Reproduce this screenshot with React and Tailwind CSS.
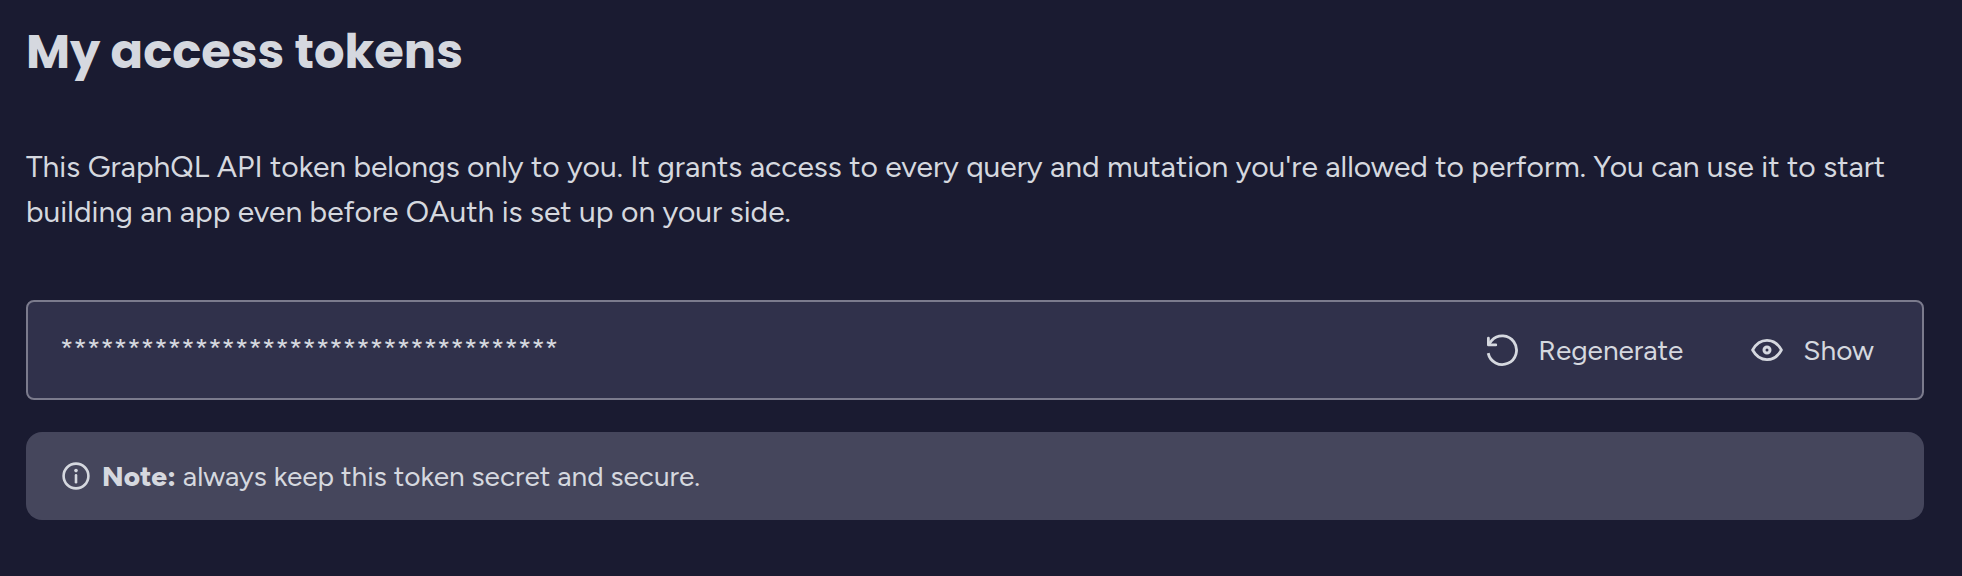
function RegenerateIcon() {
  return (
    <svg viewBox="0 0 32 32" className="size-8 shrink-0" fill="none" stroke="currentColor" strokeWidth="2.8" strokeLinejoin="round" aria-hidden="true">
      <path d="M2.2 19.1A14.3 14.3 0 1 0 5.7 6.5L2.6 10.6" />
      <path d="M2.4 4.2v6.7h7.4" strokeLinecap="round" />
    </svg>
  );
}

function EyeIcon() {
  return (
    <svg viewBox="0 0 32 32" className="size-8 shrink-0" fill="none" stroke="currentColor" strokeWidth="2.8" strokeLinejoin="round" aria-hidden="true">
      <path d="M1.6 16C5 9.8 10 6.4 16 6.4S27 9.8 30.4 16C27 22.2 22 25.6 16 25.6S5 22.2 1.6 16Z" />
      <circle cx="16" cy="16" r="3" strokeWidth="3" />
    </svg>
  );
}

function InfoIcon() {
  return (
    <svg viewBox="0 0 28 28" className="size-7 shrink-0" fill="none" stroke="currentColor" strokeWidth="2.6" strokeLinecap="round" aria-hidden="true">
      <circle cx="14" cy="14" r="12.4" />
      <path d="M14 13.4v6.8" />
      <circle cx="14" cy="8.6" r="1.8" fill="currentColor" stroke="none" />
    </svg>
  );
}

function TokenAction({ icon, children }) {
  return (
    <button type="button" className="flex items-center gap-5 text-[28px] leading-10">
      {icon}
      {children}
    </button>
  );
}

export default function App() {
  return (
    <main className="min-h-screen bg-[#1a1b31] px-[26px] pt-4 pr-[38px] pb-10 font-['Figtree','Lato',sans-serif] text-[#d5d8df]">
      <h1 className="font-['Poppins','Inter',sans-serif] text-5xl leading-[72px] font-bold">My access tokens</h1>
      <p className="mt-14 text-[30px] leading-[45px]">
        This GraphQL API token belongs only to you. It grants access to every query and mutation you're allowed to
        perform. You can use it to start building an app even before OAuth is set up on your side.
      </p>
      <div className="mt-[66px] flex h-[100px] items-center gap-[68px] rounded-lg border-2 border-[#7b7b8d] bg-[#30314b] pr-12 pl-8">
        <input
          type="text"
          readOnly
          aria-label="Access token"
          value="*************************************"
          className="min-w-0 flex-1 bg-transparent pb-1 text-[28px] outline-none"
        />
        <TokenAction icon={<RegenerateIcon />}>Regenerate</TokenAction>
        <TokenAction icon={<EyeIcon />}>Show</TokenAction>
      </div>
      <div className="mt-8 flex h-[88px] items-center gap-3 rounded-2xl bg-[#45465c] px-9">
        <InfoIcon />
        <p className="text-[28px] leading-10">
          <strong className="font-extrabold">Note:</strong> always keep this token secret and secure.
        </p>
      </div>
    </main>
  );
}
